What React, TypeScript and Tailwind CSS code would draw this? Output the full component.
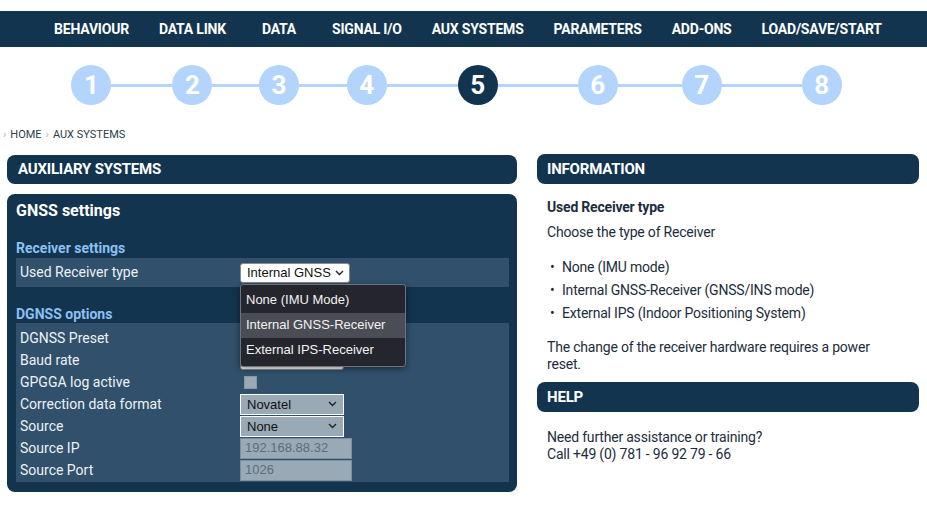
import React from 'react';

const NAV = ['BEHAVIOUR', 'DATA LINK', 'DATA', 'SIGNAL I/O', 'AUX SYSTEMS', 'PARAMETERS', 'ADD-ONS', 'LOAD/SAVE/START'];
const ACTIVE = 4;

function Chevron({ className }: { className?: string }) {
  return (
    <svg className={className} width="9" height="6" viewBox="0 0 9 6" fill="none">
      <polyline points="1,1 4.5,4.5 8,1" stroke="currentColor" strokeWidth="1.4" />
    </svg>
  );
}

function FakeSelect({ value, muted, auto }: { value: string; muted?: boolean; auto?: boolean }) {
  let cls = 'w-[104px] h-[20px] flex items-center justify-between pl-[6px] pr-[5px] bg-white border border-[#8a8a8a] rounded-[3px] text-[#111]';
  if (muted) cls = 'w-[104px] h-[21px] flex items-center justify-between pl-[6px] pr-[6px] bg-[#9aa9b6] border border-white text-[#111]';
  if (auto) cls = 'h-[20px] inline-flex items-center gap-[4px] pl-[6px] pr-[5px] bg-white border border-[#8a8a8a] rounded-[3px] text-[#111]';
  return (
    <div className={cls} style={{ fontFamily: '"Liberation Sans", Arial, sans-serif' }}>
      <span className="text-[13px] leading-none whitespace-nowrap">{value}</span>
      <Chevron className="text-[#222] shrink-0" />
    </div>
  );
}

function Row({ label, children }: { label: string; children?: React.ReactNode }) {
  return (
    <div className="grid grid-cols-[220px_1fr] items-center h-[22px] pl-[4px]">
      <span className="text-[14px] text-[#eef2f5]">{label}</span>
      <div className="flex items-center">{children}</div>
    </div>
  );
}

function Field({ value }: { value: string }) {
  return (
    <div
      className="w-[112px] h-[21px] flex items-center px-[4px] bg-[#9aa9b6] border border-[#7e8e9c] text-[13px] text-[#5f6d7a]"
      style={{ fontFamily: '"Liberation Sans", Arial, sans-serif' }}
    >
      {value}
    </div>
  );
}

export default function App() {
  return (
    <div className="w-[927px] h-[506px] bg-white overflow-hidden" style={{ fontFamily: 'Roboto, "Liberation Sans", sans-serif' }}>
      {/* top navigation */}
      <nav className="mt-[11px] h-[36px] bg-[#12344f] flex items-center pl-[39px]">
        {NAV.map((n) => (
          <span key={n} className="min-w-[76px] text-center px-[15px] text-[14px] font-bold text-white whitespace-nowrap tracking-[-0.2px]">{n}</span>
        ))}
      </nav>

      {/* stepper */}
      <div className="mt-[18px] flex pl-[39px]">
        {NAV.map((n, i) => (
          <div key={n} className="flex flex-col min-w-[76px]">
            <span className="invisible h-0 overflow-hidden px-[15px] text-[14px] font-bold whitespace-nowrap tracking-[-0.2px]">{n}</span>
            <div className="flex items-center h-[40px]">
              <div className={i === 0 ? 'flex-1 h-[3px]' : 'flex-1 h-[3px] bg-[#b3d4fc]'} />
              <div
                className={
                  i === ACTIVE
                    ? 'w-[40px] h-[40px] shrink-0 rounded-full bg-[#12344f] flex items-center justify-center text-white text-[26px] font-bold'
                    : 'w-[40px] h-[40px] shrink-0 rounded-full bg-[#b3d4fc] flex items-center justify-center text-white text-[26px] font-bold'
                }
              >
                {i + 1}
              </div>
              <div className={i === NAV.length - 1 ? 'flex-1 h-[3px]' : 'flex-1 h-[3px] bg-[#b3d4fc]'} />
            </div>
          </div>
        ))}
      </div>

      {/* breadcrumb */}
      <div className="mt-[23px] pl-[3px] flex items-center gap-[4px] text-[11px] text-[#2d3d4d] leading-[14px]">
        <span className="text-[#a8b4c0]">›</span>
        <span>HOME</span>
        <span className="text-[#a8b4c0]">›</span>
        <span>AUX SYSTEMS</span>
      </div>

      <div className="mt-[13px] flex gap-[20px] px-[7px] pr-[8px] items-start">
        {/* left column */}
        <div className="w-[510px] shrink-0 flex flex-col gap-[10px]">
          <div className="h-[29px] rounded-[8px] bg-[#12344f] flex items-center pl-[11px] text-[15px] font-bold text-white tracking-[-0.2px]">
            AUXILIARY SYSTEMS
          </div>

          <div className="rounded-[8px] bg-[#12344f] pt-[7px] pb-[10px] pl-[9px] pr-[8px]">
            <div className="text-[16px] font-bold text-white leading-[20px]">GNSS settings</div>

            <div className="mt-[19px] text-[14px] font-bold text-[#8cc0f3] leading-[16px]">Receiver settings</div>
            <div className="mt-[2px] h-[29px] bg-[#30506b] grid grid-cols-[220px_1fr] items-center pl-[4px]">
              <span className="text-[14px] text-[#eef2f5]">Used Receiver type</span>
              <div className="relative flex">
                <FakeSelect value="Internal GNSS" auto />
                <div
                  className="absolute left-0 top-[21px] z-10 w-[166px] py-[3px] bg-[#25262d] border border-[#70727a] rounded-[3px] shadow-[0_2px_6px_rgba(0,0,0,0.45)] text-[13px] text-[#f2f2f2]"
                  style={{ fontFamily: '"Liberation Sans", Arial, sans-serif' }}
                >
                  <div className="h-[25px] flex items-center px-[5px]">None (IMU Mode)</div>
                  <div className="h-[25px] flex items-center px-[5px] bg-[#4b4d56]">Internal GNSS-Receiver</div>
                  <div className="h-[25px] flex items-center px-[5px]">External IPS-Receiver</div>
                </div>
              </div>
            </div>

            <div className="mt-[19px] text-[14px] font-bold text-[#8cc0f3] leading-[16px]">DGNSS options</div>
            <div className="mt-[1px] bg-[#30506b] pt-[4px] pb-[1px]">
              {/* these two selects sit under the open dropdown */}
              <Row label="DGNSS Preset"><FakeSelect value="" /></Row>
              <Row label="Baud rate"><FakeSelect value="" /></Row>
              <Row label="GPGGA log active">
                <div className="ml-[4px] w-[13px] h-[13px] bg-[#9aa9b6] border border-[#8797a5]" />
              </Row>
              <Row label="Correction data format"><FakeSelect value="Novatel" muted /></Row>
              <Row label="Source"><FakeSelect value="None" muted /></Row>
              <Row label="Source IP"><Field value="192.168.88.32" /></Row>
              <Row label="Source Port"><Field value="1026" /></Row>
            </div>
          </div>
        </div>

        {/* right column */}
        <div className="flex-1 flex flex-col text-[#1d2d3d]">
          <div className="h-[30px] -mt-[1px] rounded-[8px] bg-[#12344f] flex items-center pl-[10px] text-[15px] font-bold text-white tracking-[-0.2px]">
            INFORMATION
          </div>
          <div className="pl-[10px] text-[14px] leading-[17px] tracking-[-0.2px]">
            <div className="mt-[15px] font-bold">Used Receiver type</div>
            <div className="mt-[8px]">Choose the type of Receiver</div>
            <ul className="mt-[18px] flex flex-col gap-[6px]">
              <li className="flex"><span className="w-[15px] pl-[3px]">•</span>None (IMU mode)</li>
              <li className="flex"><span className="w-[15px] pl-[3px]">•</span>Internal GNSS-Receiver (GNSS/INS mode)</li>
              <li className="flex"><span className="w-[15px] pl-[3px]">•</span>External IPS (Indoor Positioning System)</li>
            </ul>
            <p className="mt-[17px] pr-[20px]">The change of the receiver hardware requires a power reset.</p>
          </div>
          <div className="mt-[9px] h-[30px] rounded-[8px] bg-[#12344f] flex items-center pl-[10px] text-[15px] font-bold text-white tracking-[-0.2px]">
            HELP
          </div>
          <div className="pl-[10px] mt-[17px] text-[14px] leading-[17px] tracking-[-0.2px]">
            <div>Need further assistance or training?</div>
            <div>Call +49 (0) 781 - 96 92 79 - 66</div>
          </div>
        </div>
      </div>
    </div>
  );
}
